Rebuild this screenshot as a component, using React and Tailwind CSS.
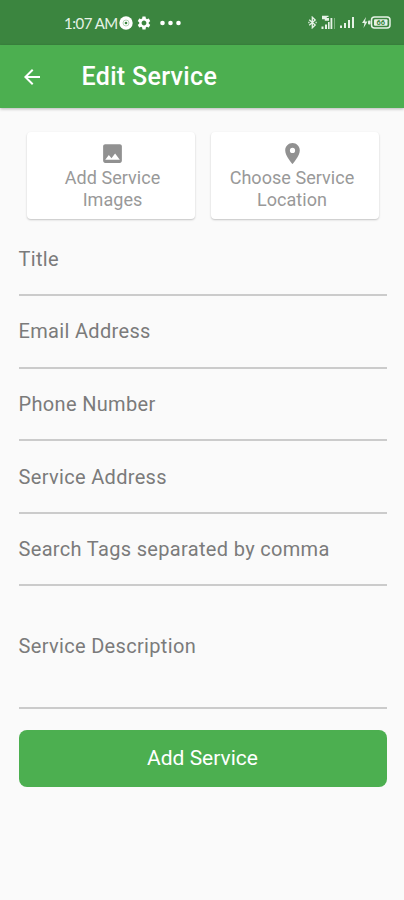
import { MdArrowBack, MdImage, MdPlace, MdSettings } from 'react-icons/md';

const fields = [
  { label: 'Title', height: 'h-[72px]' },
  { label: 'Email Address', height: 'h-[73px] pb-px' },
  { label: 'Phone Number', height: 'h-[72px]' },
  { label: 'Service Address', height: 'h-[73px]' },
  { label: 'Search Tags separated by comma', height: 'h-[72px]' },
];

function SignalBars({ className }) {
  return (
    <svg viewBox="0 0 15 11" className={className} fill="currentColor">
      <rect x="0" y="8.5" width="2" height="2.5" />
      <rect x="4" y="6" width="2" height="5" />
      <rect x="8" y="3" width="2" height="8" />
      <rect x="12" y="0" width="2" height="11" />
    </svg>
  );
}

function StatusBar() {
  return (
    <div className="flex h-[45px] items-center justify-between bg-[#3b853f] pr-[13px] pl-[64px] text-[#e6f2e6]">
      <div className="flex items-center">
        <span className="w-[55px] pt-px font-['Lato',sans-serif] text-[15px] leading-none tracking-[-0.5px] whitespace-nowrap">
          1:07 AM
        </span>
        <svg viewBox="0 0 14 14" className="size-[14px] text-white">
          <circle cx="7" cy="7" r="6.7" fill="currentColor" />
          <circle cx="7" cy="7" r="3" fill="none" stroke="#b5d3b6" strokeWidth="1" />
          <circle cx="7" cy="7" r="1.3" fill="#3b853f" />
        </svg>
        <MdSettings className="ml-[3px] size-4 text-white" />
        <svg viewBox="0 0 22 6" className="ml-[8px] h-[6px] w-[22px] text-white" fill="currentColor">
          <circle cx="2.5" cy="3" r="2.3" />
          <circle cx="10.5" cy="3" r="2.3" />
          <circle cx="18.5" cy="3" r="2.3" />
        </svg>
      </div>
      <div className="flex items-center">
        <svg viewBox="0 0 9 13" className="h-[13px] w-[9px]" fill="none" stroke="currentColor" strokeWidth="1.3">
          <path d="M1.2 3.7l6 5.3-2.9 2.8V1.2L7.2 4l-6 5.3" />
          <path d="M0.3 6.5h1.2M7.5 6.5h1.2" />
        </svg>
        <svg viewBox="0 0 15 15" className="ml-[4px] h-[15px] w-[15px]" fill="currentColor">
          <path d="M1 0.8h6.5v1.2H5.8v1h2.2v2.7H3.8V4.2H1z" />
          <rect x="0.5" y="11.5" width="2" height="2.5" />
          <rect x="4" y="9.5" width="2" height="4.5" />
          <rect x="7" y="7" width="1.6" height="7" />
          <rect x="9.5" y="3" width="1.8" height="11" />
          <rect x="13" y="3" width="1" height="11" opacity="0.4" />
        </svg>
        <SignalBars className="ml-[4px] h-[11px] w-[15px]" />
        <svg viewBox="0 0 29 13" className="ml-[7px] h-[13px] w-[29px]">
          <path d="M4 1L0 7h2.5L1.5 12L5.5 5.5H3z" fill="currentColor" />
          <rect x="6" y="4.5" width="2.5" height="4" rx="1" fill="currentColor" />
          <rect x="9.5" y="1" width="18.5" height="11" rx="3" fill="none" stroke="currentColor" strokeWidth="1.5" />
          <rect x="12" y="3.2" width="13.5" height="6.6" rx="1" fill="currentColor" />
          <text x="18.7" y="9.2" textAnchor="middle" fontFamily="Roboto, sans-serif" fontSize="7.5" fontWeight="700" fill="#3b853f">
            66
          </text>
        </svg>
      </div>
    </div>
  );
}

function AppBar() {
  return (
    <header className="flex h-[63px] items-center bg-[#4caf50] pl-[20px] text-white shadow-[0_1px_3px_rgba(0,0,0,0.28)]">
      <MdArrowBack className="size-6" />
      <h1 className="ml-[37.5px] text-[25px] leading-none font-medium tracking-[0.33px]">Edit Service</h1>
    </header>
  );
}

function PickerCard({ icon: Icon, top, bottom, inset }) {
  return (
    <button
      className={`flex h-[87px] w-[168px] flex-col items-center rounded-[4px] bg-white pt-[9px] text-[18px] leading-[21.5px] tracking-[0.05px] text-[#999] shadow-[0_1px_2px_rgba(0,0,0,0.22)] ${inset}`}
    >
      <Icon className="mb-px size-[25px] text-[#919191]" />
      <span>{top}</span>
      <span>{bottom}</span>
    </button>
  );
}

function Field({ label, height }) {
  return (
    <div className={`flex items-center border-b-2 border-[#cbcbcb] ${height}`}>
      <label className="text-[20px] leading-6 tracking-[0.33px] text-[#7b7b7b]">{label}</label>
    </div>
  );
}

export default function App() {
  return (
    <div className="h-[900px] w-full overflow-hidden bg-[#fafafa] font-['Roboto',sans-serif]">
      <StatusBar />
      <AppBar />
      <main className="pt-[24px] pr-[17.5px] pl-[18.5px]">
        <div className="flex gap-[16px] pl-[8px]">
          <PickerCard icon={MdImage} top="Add Service" bottom="Images" inset="pl-[4px]" />
          <PickerCard icon={MdPlace} top="Choose Service" bottom="Location" inset="pr-[5px]" />
        </div>
        <form className="mt-[5px]">
          {fields.map((field) => (
            <Field key={field.label} {...field} />
          ))}
          <Field label="Service Description" height="h-[123px] pb-[2px]" />
          <button
            type="button"
            className="mt-[21px] h-[57px] w-full rounded-[8px] bg-[#4caf50] text-[21px] leading-none text-white"
          >
            Add Service
          </button>
        </form>
      </main>
    </div>
  );
}
